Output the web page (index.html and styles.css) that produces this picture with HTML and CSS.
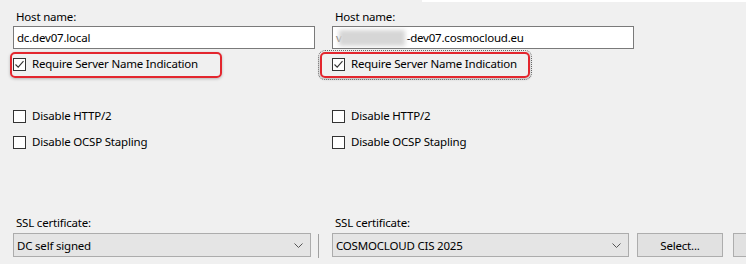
FILE: index.html
```html
<!DOCTYPE html>
<html>
<head>
<meta charset="utf-8">
<link rel="stylesheet" href="styles.css">
</head>
<body>
<div class="topstrip"></div>
<div class="grid">
  <div class="col">
    <div class="label">Host name:</div>
    <div class="textbox">dc.dev07.local</div>
    <div class="sni sni-left">
      <span class="cb checked"><svg width="11" height="11" viewBox="0 0 11 11"><path d="M1.5 5.5 L4.2 8.2 L9.5 2.2" fill="none" stroke="#333" stroke-width="1.1"/></svg></span>
      <span class="cbtext">Require Server Name Indication</span>
    </div>
    <div class="check first"><span class="cb"></span><span class="cbtext">Disable HTTP/2</span></div>
    <div class="check second"><span class="cb"></span><span class="cbtext">Disable OCSP Stapling</span></div>
    <div class="label ssl">SSL certificate:</div>
  </div>
  <div class="col">
    <div class="label">Host name:</div>
    <div class="textbox"><span class="blur-lead">v</span><span class="blur"></span><span class="host">-dev07.cosmocloud.eu</span></div>
    <div class="sni sni-right">
      <span class="cb checked"><svg width="11" height="11" viewBox="0 0 11 11"><path d="M1.5 5.5 L4.2 8.2 L9.5 2.2" fill="none" stroke="#333" stroke-width="1.1"/></svg></span>
      <span class="cbtext">Require Server Name Indication</span>
    </div>
    <div class="check first"><span class="cb"></span><span class="cbtext">Disable HTTP/2</span></div>
    <div class="check second"><span class="cb"></span><span class="cbtext">Disable OCSP Stapling</span></div>
    <div class="label ssl">SSL certificate:</div>
  </div>
</div>
<div class="bottom">
  <div class="combo combo-left"><span>DC self signed</span><svg class="chev" width="9" height="5" viewBox="0 0 9 5"><path d="M0.5 0.5 L4.5 4.5 L8.5 0.5" fill="none" stroke="#555" stroke-width="1"/></svg></div>
  <div class="sep"></div>
  <div class="combo combo-right"><span>COSMOCLOUD CIS 2025</span><svg class="chev" width="9" height="5" viewBox="0 0 9 5"><path d="M0.5 0.5 L4.5 4.5 L8.5 0.5" fill="none" stroke="#555" stroke-width="1"/></svg></div>
  <div class="btn">Select...</div>
  <div class="btn btn-cut"></div>
</div>
</body>
</html>
```
FILE: styles.css
```css
html, body {
  margin: 0;
  padding: 0;
  background: #f0f0f0;
  overflow: hidden;
}
body {
  width: 746px;
  height: 264px;
  font-family: "Noto Sans", "Open Sans", sans-serif;
  font-size: 11.5px;
  letter-spacing: -0.2px;
  color: #000;
}
.topstrip {
  height: 2px;
  margin-left: 422px;
  background: #fff;
}
.grid {
  display: grid;
  grid-template-columns: 302px 302px;
  column-gap: 17px;
  padding-left: 13px;
}
.col {
  display: flex;
  flex-direction: column;
  align-items: flex-start;
}
.label {
  height: 16px;
  line-height: 16px;
  margin-top: 7px;
  padding-left: 3px;
}
.textbox {
  box-sizing: border-box;
  width: 302px;
  height: 23px;
  margin-top: 1px;
  border: 1px solid #7a7a7a;
  background: #fff;
  padding-left: 3px;
  line-height: 20px;
  display: flex;
  align-items: center;
  white-space: nowrap;
  overflow: hidden;
}
.blur-lead {
  color: #777;
}
.blur {
  display: inline-block;
  width: 66px;
  height: 16px;
  margin-left: -3px;
  background: #d6d6d6;
  filter: blur(2px);
}
.host {
  margin-left: 2px;
}
.sni {
  box-sizing: border-box;
  height: 26px;
  margin-top: 3px;
  border: 2px solid #e3262e;
  border-radius: 5px;
  display: flex;
  align-items: flex-start;
  padding-top: 4px;
  box-shadow: 0 1px 3px rgba(0,0,0,0.25);
}
.sni-left {
  margin-left: -3px;
  width: 212px;
  padding-left: 1px;
}
.sni-right {
  margin-left: -12px;
  width: 210px;
  padding-left: 10px;
  outline: 1px dotted #666;
  outline-offset: 1px;
}
.cb {
  box-sizing: border-box;
  width: 13px;
  height: 13px;
  border: 1px solid #333;
  background: #fff;
  display: inline-flex;
  align-items: center;
  justify-content: center;
  flex: none;
}
.cb.checked svg {
  display: block;
}
.cbtext {
  margin-left: 6px;
  line-height: 14px;
  margin-top: -1px;
  white-space: nowrap;
}
.check {
  display: flex;
  align-items: flex-start;
}
.check.first {
  margin-top: 32px;
}
.check.second {
  margin-top: 13px;
}
.label.ssl {
  margin-top: 66px;
}
.bottom {
  display: flex;
  align-items: flex-start;
  padding-left: 13px;
  margin-top: 2px;
}
.bottom > * {
  flex: none;
}
.combo {
  box-sizing: border-box;
  height: 24px;
  border: 1px solid #acacac;
  background: #e5e5e5;
  display: flex;
  align-items: center;
  justify-content: space-between;
  padding-left: 3px;
  padding-right: 7px;
  white-space: nowrap;
}
.combo-left {
  width: 298px;
}
.combo-right {
  width: 297px;
}
.chev {
  display: block;
}
.sep {
  width: 1px;
  height: 24px;
  margin-top: 1px;
  margin-left: 7px;
  margin-right: 13px;
  background: #a0a0a0;
}
.btn {
  box-sizing: border-box;
  width: 86px;
  height: 24px;
  margin-left: 8px;
  border: 1px solid #adadad;
  background: #e1e1e1;
  display: flex;
  align-items: center;
  justify-content: center;
}
.btn-cut {
  width: 30px;
  margin-left: 10px;
}
```
